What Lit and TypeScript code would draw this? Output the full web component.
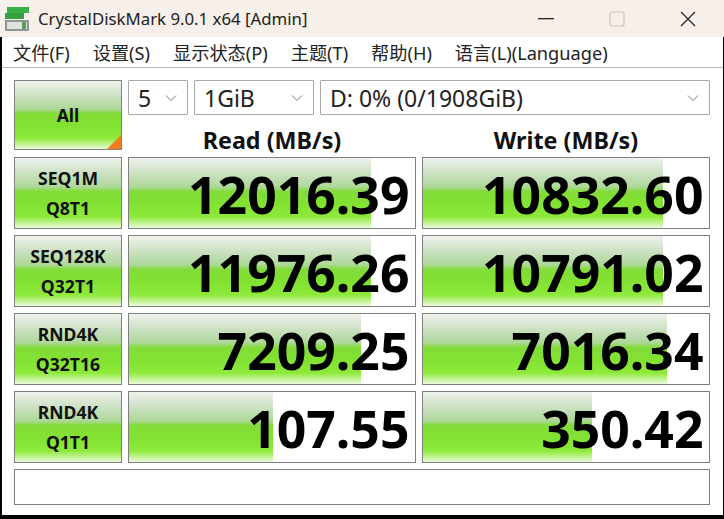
import { LitElement, html, css, svg } from "lit";
import { customElement } from "lit/decorators.js";

const rows = [
  { a: "SEQ1M", b: "Q8T1", read: "12016.39", rw: 242, write: "10832.60", ww: 240 },
  { a: "SEQ128K", b: "Q32T1", read: "11976.26", rw: 242, write: "10791.02", ww: 240 },
  { a: "RND4K", b: "Q32T16", read: "7209.25", rw: 232, write: "7016.34", ww: 244 },
  { a: "RND4K", b: "Q1T1", read: "107.55", rw: 144, write: "350.42", ww: 169 },
];

const chevron = svg`<svg class="chev" width="12" height="8" viewBox="0 0 12 8"><path d="M1 1.5 6 6.5 11 1.5" fill="none" stroke="#7a7a7a" stroke-width="1"/></svg>`;

@customElement("app-root")
export class AppRoot extends LitElement {
  static styles = css`
    :host { display: block; width: 724px; height: 519px; overflow: hidden; background: #000; font-family: "Noto Sans", "Noto Sans CJK SC", sans-serif; }
    .title { height: 37px; background: #f6efea; display: flex; align-items: center; box-sizing: border-box; padding-left: 5px; color: #222; }
    .title .name { font-size: 16.8px; margin-left: 9px; flex: 1; white-space: nowrap; }
    .winbtns { display: flex; align-items: center; padding-right: 1px; }
    .winbtn { width: 71px; height: 37px; display: flex; align-items: center; justify-content: center; }
    .body { margin: 0 1px 2px 2px; height: 478px; background: #fff; display: flex; flex-direction: column; }
    .menu { height: 31px; display: flex; align-items: center; box-sizing: border-box; border-bottom: 1px solid #b9b9b9; padding-left: 11px; gap: 23px; font-size: 18.2px; color: #222; white-space: nowrap; }
    .content { padding: 12px 12px 0 12px; display: grid; grid-template-columns: 108px 288px 288px; column-gap: 6px; }
    .all { height: 70px; position: relative; }
    .btn { box-sizing: border-box; border: 1px solid #7f7f7f; display: flex; flex-direction: column; align-items: center; justify-content: center;
      background: linear-gradient(180deg, #eff3ed 0%, #d2e3ca 18%, #aed89a 41%, #82dc38 48%, #82e232 66%, #8eea3a 84%, #eafadb 100%);
      font-weight: 700; color: #111; font-size: 17.6px; line-height: 30px; }
    .corner { position: absolute; right: 0; bottom: 0; width: 0; height: 0; border-style: solid; border-width: 0 0 14px 14px; border-color: transparent transparent #ee7f1a transparent; }
    .top { grid-column: span 2; display: flex; flex-direction: column; }
    .selects { display: flex; gap: 6px; height: 35px; }
    .sel { box-sizing: border-box; height: 35px; border: 1px solid #a8a8a8; display: flex; align-items: center; justify-content: space-between; padding: 0 10px 0 9px; font-size: 23px; color: #222; background: #fff; border-radius: 1px; }
    .s1 { width: 60px; } .s2 { width: 120px; } .s3 { width: 390px; }
    .heads { display: grid; grid-template-columns: 288px 288px; column-gap: 6px; height: 35px; }
    .head { text-align: center; font-weight: 700; font-size: 23.3px; line-height: 27px; padding-top: 12px; color: #111; white-space: nowrap; height: 23px; }
    .grid { grid-column: 1 / -1; display: grid; grid-template-columns: 108px 288px 288px; gap: 6px; margin-top: 7px; }
    .cell { height: 72px; }
    .val { box-sizing: border-box; height: 72px; border: 1px solid #7f7f7f; position: relative; background: #fff; display: flex; justify-content: flex-end; align-items: center; }
    .bar { position: absolute; left: 0; top: 0; bottom: 0;
      background: linear-gradient(180deg, #eff3ed 0%, #d2e3ca 18%, #aed89a 41%, #82dc38 48%, #82e232 66%, #8eea3a 84%, #eafadb 100%); }
    .num { position: relative; font-weight: 700; font-size: 51.7px; line-height: 72px; color: #000; padding-right: 5.5px; padding-top: 2px; }
    .msg { grid-column: 1 / -1; box-sizing: border-box; height: 36px; border: 1px solid #7f7f7f; margin-top: 6px; background: #fff; }
  `;

  render() {
    return html`
      <div class="title">
        <svg width="24" height="26" viewBox="0 0 24 26">
          <rect x="0" y="14" width="24" height="11" rx="1" fill="#8d978e"/>
          <rect x="2" y="16" width="20" height="7" fill="#dfe3df"/>
          <rect x="17" y="16" width="4" height="7" fill="#5f9a5a"/>
          <rect x="0" y="7" width="19" height="6" fill="#35a144"/>
          <rect x="2" y="1" width="22" height="6" fill="#37b04a"/>
        </svg>
        <span class="name">CrystalDiskMark 9.0.1 x64 [Admin]</span>
        <div class="winbtns">
          <div class="winbtn"><svg width="16" height="2" viewBox="0 0 16 2"><rect width="16" height="1.3" fill="#222"/></svg></div>
          <div class="winbtn"><svg width="16" height="16" viewBox="0 0 16 16"><rect x="1" y="1" width="14" height="14" rx="2" fill="none" stroke="#c9c5c1" stroke-width="1.2"/></svg></div>
          <div class="winbtn"><svg width="16" height="16" viewBox="0 0 16 16"><path d="M1 1 15 15M15 1 1 15" stroke="#222" stroke-width="1.2"/></svg></div>
        </div>
      </div>
      <div class="body">
        <div class="menu">
          <span>文件(F)</span><span>设置(S)</span><span>显示状态(P)</span><span>主题(T)</span><span>帮助(H)</span><span>语言(L)(Language)</span>
        </div>
        <div class="content">
          <div class="btn all">All<div class="corner"></div></div>
          <div class="top">
            <div class="selects">
              <div class="sel s1"><span>5</span>${chevron}</div>
              <div class="sel s2"><span>1GiB</span>${chevron}</div>
              <div class="sel s3"><span>D: 0% (0/1908GiB)</span>${chevron}</div>
            </div>
            <div class="heads"><div class="head">Read (MB/s)</div><div class="head">Write (MB/s)</div></div>
          </div>
          <div class="grid">
            ${rows.map(
              (r) => html`
                <div class="btn cell"><span>${r.a}</span><span>${r.b}</span></div>
                <div class="val"><div class="bar" style="width:${r.rw}px"></div><span class="num">${r.read}</span></div>
                <div class="val"><div class="bar" style="width:${r.ww}px"></div><span class="num">${r.write}</span></div>
              `
            )}
          </div>
          <div class="msg"></div>
        </div>
      </div>
    `;
  }
}
